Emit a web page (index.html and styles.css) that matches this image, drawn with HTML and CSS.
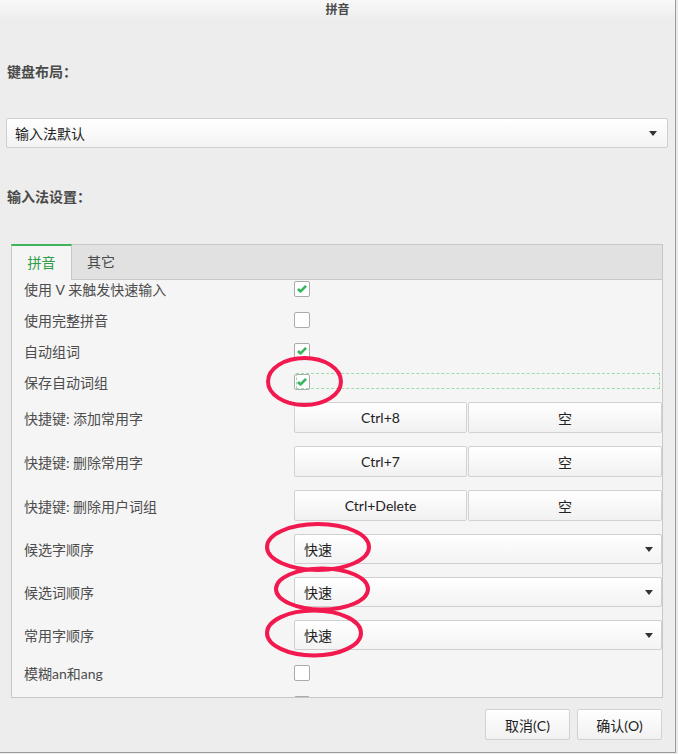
FILE: index.html
```html
<!DOCTYPE html>
<html lang="zh-CN">
<head>
    <meta charset="UTF-8">
    <title>拼音</title>
    <link rel="stylesheet" href="styles.css">
</head>
<body>
    <div class="dialog">
        <div class="title-bar">拼音</div>

        <div class="group-label first">键盘布局：</div>
        <div class="combo combo-wide">
            <span>输入法默认</span>
            <span class="arrow"></span>
        </div>

        <div class="group-label second">输入法设置：</div>

        <div class="tabs">
            <div class="tab-bar">
                <div class="tab active">拼音</div>
                <div class="tab-rest"><span class="tab">其它</span></div>
            </div>
            <div class="pane">
                <div class="pane-content">
                    <div class="row check-row">
                        <div class="label">使用 V 来触发快速输入</div>
                        <div class="control"><span class="checkbox checked"><svg viewBox="0 0 16 16"><path d="M3.4 8 L6.4 10.8 L12.6 4.4"/></svg></span></div>
                    </div>
                    <div class="row check-row">
                        <div class="label">使用完整拼音</div>
                        <div class="control"><span class="checkbox"></span></div>
                    </div>
                    <div class="row check-row">
                        <div class="label">自动组词</div>
                        <div class="control"><span class="checkbox checked"><svg viewBox="0 0 16 16"><path d="M3.4 8 L6.4 10.8 L12.6 4.4"/></svg></span></div>
                    </div>
                    <div class="row check-row">
                        <div class="label">保存自动词组</div>
                        <div class="control focused"><span class="checkbox checked"><svg viewBox="0 0 16 16"><path d="M3.4 8 L6.4 10.8 L12.6 4.4"/></svg></span></div>
                    </div>

                    <div class="row key-row first-key">
                        <div class="label">快捷键: 添加常用字</div>
                        <div class="control keys">
                            <button class="key key-main">Ctrl+8</button>
                            <button class="key key-alt">空</button>
                        </div>
                    </div>
                    <div class="row key-row">
                        <div class="label">快捷键: 删除常用字</div>
                        <div class="control keys">
                            <button class="key key-main">Ctrl+7</button>
                            <button class="key key-alt">空</button>
                        </div>
                    </div>
                    <div class="row key-row">
                        <div class="label">快捷键: 删除用户词组</div>
                        <div class="control keys">
                            <button class="key key-main">Ctrl+Delete</button>
                            <button class="key key-alt">空</button>
                        </div>
                    </div>

                    <div class="row combo-row">
                        <div class="label">候选字顺序</div>
                        <div class="control combo"><span>快速</span><span class="arrow"></span></div>
                    </div>
                    <div class="row combo-row">
                        <div class="label">候选词顺序</div>
                        <div class="control combo"><span>快速</span><span class="arrow"></span></div>
                    </div>
                    <div class="row combo-row">
                        <div class="label">常用字顺序</div>
                        <div class="control combo"><span>快速</span><span class="arrow"></span></div>
                    </div>

                    <div class="row check-row after-combo">
                        <div class="label">模糊an和ang</div>
                        <div class="control"><span class="checkbox"></span></div>
                    </div>
                    <div class="row check-row">
                        <div class="label"></div>
                        <div class="control"><span class="checkbox"></span></div>
                    </div>
                </div>
            </div>
        </div>

        <div class="dialog-buttons">
            <button class="dialog-button">取消(C)</button>
            <button class="dialog-button">确认(O)</button>
        </div>

        <!-- red annotation circles drawn over the dialog -->
        <svg class="marks" width="675" height="752" viewBox="0 0 675 752">
            <ellipse cx="304.5" cy="381.5" rx="36.5" ry="23.5"/>
            <ellipse cx="318" cy="547" rx="51" ry="23"/>
            <ellipse cx="322" cy="589" rx="46" ry="20.5"/>
            <ellipse cx="314" cy="633" rx="47" ry="22.5"/>
        </svg>
    </div>
</body>
</html>
```

FILE: styles.css
```css
body {
    margin: 0;
    background-color: #e9e9e9;
    font-family: 'Lato', 'Noto Sans CJK SC', sans-serif;
    font-size: 14px;
    color: #4a4a4a;
    width: 678px;
    height: 754px;
    overflow: hidden;
}

.dialog {
    position: relative;
    width: 675px;
    height: 752px;
    background-color: #ededed;
    border-right: 1px solid #9c9c9c;
    border-bottom: 1px solid #9c9c9c;
    display: flex;
    flex-direction: column;
}

.title-bar {
    height: 20px;
    line-height: 20px;
    text-align: center;
    font-size: 12px;
    font-weight: bold;
    color: #4a4a4a;
    background: linear-gradient(#f8f8f8, #ededed);
}

.group-label {
    height: 16px;
    line-height: 16px;
    padding-left: 7px;
    font-weight: bold;
    color: #4a4a4a;
}

.group-label.first {
    margin-top: 44px;
}

.group-label.second {
    margin-top: 41px;
}

.combo {
    display: flex;
    align-items: center;
    justify-content: space-between;
    box-sizing: border-box;
    height: 30px;
    padding: 0 8px 0 9px;
    background: linear-gradient(#ffffff, #f3f3f3);
    border: 1px solid #cfcfcf;
    border-radius: 2px;
    color: #222;
}

.combo-wide {
    margin: 38px 7px 0 6px;
    padding: 0 10px 0 8px;
}

.arrow {
    width: 0;
    height: 0;
    border-left: 4.5px solid transparent;
    border-right: 4.5px solid transparent;
    border-top: 5px solid #333;
}

.tabs {
    margin: 39px 12px 0 11px;
}

.tab-bar {
    display: flex;
    height: 36px;
}

.tab {
    line-height: 34px;
}

.tab.active {
    box-sizing: border-box;
    width: 61px;
    text-align: center;
    color: #2d9c48;
    background-color: #f5f5f5;
    border-top: 2px solid #3fb35c;
    border-left: 1px solid #c8c8c8;
    border-right: 1px solid #c8c8c8;
}

.tab-rest {
    flex: 1;
    background-color: #e1e1e1;
    border-top: 1px solid #c8c8c8;
    border-right: 1px solid #c8c8c8;
    border-bottom: 1px solid #c8c8c8;
    padding-left: 15px;
    color: #4a4a4a;
}

.pane {
    height: 417px;
    overflow: hidden;
    background-color: #f5f5f5;
    border-left: 1px solid #c8c8c8;
    border-right: 1px solid #c8c8c8;
    border-bottom: 1px solid #c8c8c8;
}

.pane-content {
    margin-top: -7px;
    padding-left: 12px;
}

.row {
    display: flex;
    align-items: center;
}

.label {
    width: 270px;
    flex-shrink: 0;
    color: #4d4d4d;
}

.control {
    flex: 1;
    display: flex;
    align-items: center;
}

.check-row {
    height: 31px;
}

.check-row.after-combo {
    margin-top: 7px;
}

.checkbox {
    box-sizing: border-box;
    width: 16px;
    height: 16px;
    background-color: #fff;
    border: 1px solid #ababab;
    border-radius: 2px;
    display: flex;
}

.checkbox svg {
    width: 14px;
    height: 14px;
}

.checkbox path {
    fill: none;
    stroke: #35b658;
    stroke-width: 3;
    stroke-linejoin: round;
}

.control.focused {
    position: relative;
    align-self: stretch;
}

.control.focused::after {
    content: "";
    position: absolute;
    left: 2px;
    right: 2px;
    top: 7px;
    bottom: 8px;
    border: 1px dashed #9ddcac;
}

.key-row {
    height: 31px;
    margin-top: 13px;
}

.key-row.first-key {
    margin-top: 5px;
}

.keys {
    align-self: stretch;
    align-items: stretch;
    gap: 1px;
}

.key {
    font-family: inherit;
    font-size: 14px;
    color: #222;
    background: linear-gradient(#ffffff, #f1f1f1);
    border: 1px solid #d2d2d2;
    border-radius: 2px;
    padding: 0;
}

.key-main {
    width: 173px;
}

.key-alt {
    flex: 1;
}

.combo-row {
    height: 30px;
    margin-top: 13px;
}

.combo-row .control {
    height: 30px;
}

.dialog-buttons {
    display: flex;
    justify-content: flex-end;
    gap: 7px;
    margin: 11px 13px 0 0;
}

.dialog-button {
    width: 85px;
    height: 31px;
    font-family: inherit;
    font-size: 14px;
    color: #222;
    background: linear-gradient(#ffffff, #f1f1f1);
    border: 1px solid #d2d2d2;
    border-radius: 2px;
    padding: 0;
}

.marks {
    position: absolute;
    left: 0;
    top: 0;
    pointer-events: none;
}

.marks ellipse {
    fill: none;
    stroke: #f2194f;
    stroke-width: 4;
}
```
